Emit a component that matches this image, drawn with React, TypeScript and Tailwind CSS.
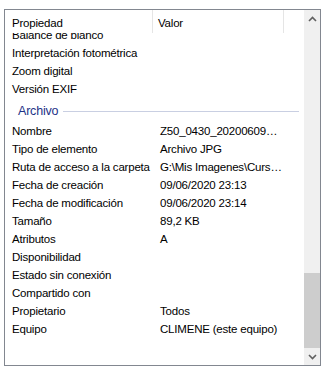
import type { ReactNode } from 'react';

type Row = { name: string; value?: string };

const exifRows: Row[] = [
  { name: 'Balance de blanco' },
  { name: 'Interpretación fotométrica' },
  { name: 'Zoom digital' },
  { name: 'Versión EXIF' },
];

const archivoRows: Row[] = [
  { name: 'Nombre', value: 'Z50_0430_20200609_231316.JPG' },
  { name: 'Tipo de elemento', value: 'Archivo JPG' },
  { name: 'Ruta de acceso a la carpeta', value: 'G:\\Mis Imagenes\\Cursos\\Z50' },
  { name: 'Fecha de creación', value: '09/06/2020 23:13' },
  { name: 'Fecha de modificación', value: '09/06/2020 23:14' },
  { name: 'Tamaño', value: '89,2 KB' },
  { name: 'Atributos', value: 'A' },
  { name: 'Disponibilidad' },
  { name: 'Estado sin conexión' },
  { name: 'Compartido con' },
  { name: 'Propietario', value: 'Todos' },
  { name: 'Equipo', value: 'CLIMENE (este equipo)' },
];

// single property row: name column + value column
function PropRow({ row }: { row: Row }) {
  return (
    <div className="flex h-[18px] items-center">
      <div className="w-[148px] shrink-0 truncate pl-[7px]">{row.name}</div>
      <div className="w-[131px] shrink-0 overflow-hidden text-ellipsis whitespace-nowrap pl-[7px] pr-[2px]">
        {row.value}
      </div>
    </div>
  );
}

function GroupHeader({ children }: { children: ReactNode }) {
  return (
    <div className="flex h-[24px] items-center pl-[13px] pr-[5px]">
      <span className="text-[12.5px] text-[#1e3287]">{children}</span>
      <div className="ml-[5px] h-px flex-1 bg-[#c9cfe2]" />
    </div>
  );
}

function Arrow({ down }: { down?: boolean }) {
  return (
    <div className="flex h-[17px] items-center justify-center">
      <svg width="9" height="6" viewBox="0 0 9 6" className={down ? 'rotate-180' : ''}>
        <path d="M1 5 L4.5 1.5 L8 5" fill="none" stroke="#606060" strokeWidth="1.6" />
      </svg>
    </div>
  );
}

export default function App() {
  return (
    <div
      className="h-[369px] w-[322px] bg-white pl-[4px] pt-[9px] text-[11.5px] tracking-[-0.2px] text-black"
      style={{ fontFamily: '"Liberation Sans", Arial, sans-serif' }}
    >
      <div className="flex h-[357px] w-[317px] border border-[#828790]">
        {/* list area */}
        <div className="flex min-w-0 flex-1 flex-col">
          {/* column header */}
          <div className="flex h-[23px] shrink-0">
            <div className="flex w-[148px] shrink-0 items-center border-r border-[#e5e5e5] pl-[7px] pt-[5px]">Propiedad</div>
            <div className="flex w-[131px] shrink-0 items-center border-r border-[#e5e5e5] pl-[5px] pt-[5px]">Valor</div>
          </div>
          {/* rows, scrolled so the first row is partly hidden */}
          <div className="flex-1 overflow-hidden">
            <div className="-mt-[6px]">
              {exifRows.map((r) => (
                <PropRow key={r.name} row={r} />
              ))}
              <GroupHeader>Archivo</GroupHeader>
              {archivoRows.map((r) => (
                <PropRow key={r.name} row={r} />
              ))}
            </div>
          </div>
        </div>
        {/* scrollbar */}
        <div className="flex w-[16px] shrink-0 flex-col bg-[#f0f0f0]">
          <Arrow />
          <div className="flex flex-1 flex-col">
            <div className="h-[246px]" />
            <div className="flex-1 bg-[#cdcdcd]" />
          </div>
          <Arrow down />
        </div>
      </div>
    </div>
  );
}
